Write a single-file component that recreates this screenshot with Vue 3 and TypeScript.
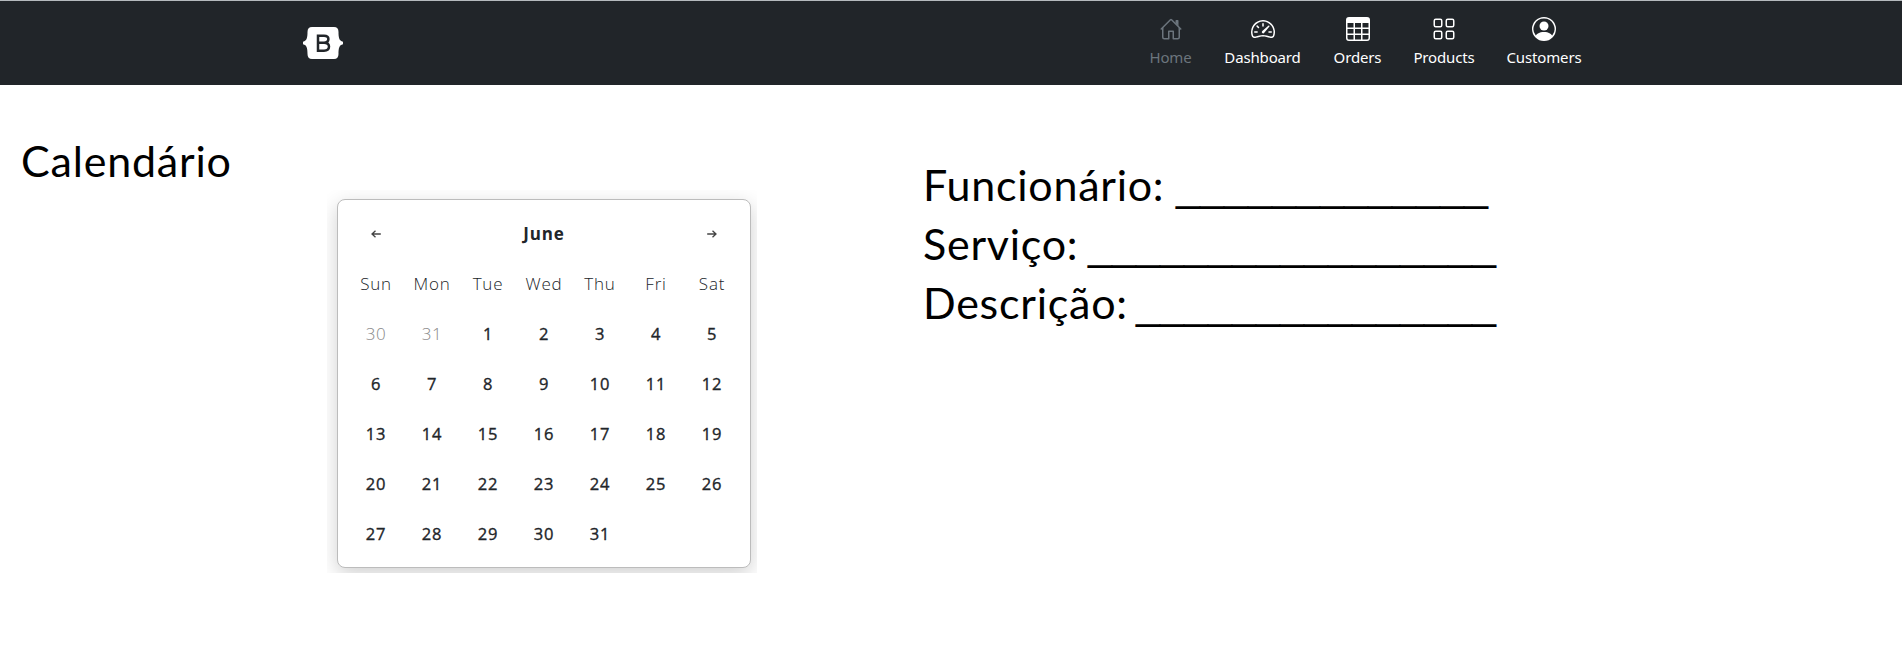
<script setup lang="ts">
interface NavItem {
  label: string
  paths: string[]
  active?: boolean
}

const navItems: NavItem[] = [
  {
    label: 'Home',
    active: true,
    paths: [
      'M2 13.5V7h1v6.500a.5.5 0 0 0 .5.5H6v-4.500a.5.5 0 0 1 .5-.5h3a.5.5 0 0 1 .5.5V14h2.500a.5.5 0 0 0 .5-.5V7h1v6.500a1.500 1.500 0 0 1-1.500 1.500H9.500a.5.5 0 0 1-.5-.5V10H7v4.500a.5.5 0 0 1-.5.5h-3A1.500 1.500 0 0 1 2 13.500zM13 2.500V6l-2-2V2.500a.5.5 0 0 1 .5-.5h1a.5.5 0 0 1 .5.5z',
      'M7.293 1.5a1 1 0 0 1 1.414 0l6.147 6.146a.5.5 0 0 1-.708.708L8 2.207 1.854 8.354a.5.5 0 1 1-.708-.708L7.293 1.5z',
    ],
  },
  {
    label: 'Dashboard',
    paths: [
      'M8 4a.5.5 0 0 1 .5.5V6a.5.5 0 0 1-1 0V4.5A.5.5 0 0 1 8 4zM3.732 5.732a.5.5 0 0 1 .707 0l.915.914a.5.5 0 1 1-.708.708l-.914-.915a.5.5 0 0 1 0-.707zM2 10a.5.5 0 0 1 .5-.5h1.586a.5.5 0 0 1 0 1H2.5A.5.5 0 0 1 2 10zm9.5 0a.5.5 0 0 1 .5-.5h1.5a.5.5 0 0 1 0 1H12a.5.5 0 0 1-.5-.5zm.754-4.246a.389.389 0 0 0-.527-.02L7.547 9.31a.91.91 0 1 0 1.302 1.258l3.434-4.297a.389.389 0 0 0-.029-.518z',
      'M0 10a8 8 0 1 1 15.547 2.661c-.442 1.253-1.845 1.602-2.932 1.25C11.309 13.488 9.475 13 8 13c-1.474 0-3.31.488-4.615.911-1.087.352-2.49.003-2.932-1.25A7.988 7.988 0 0 1 0 10zm8-7a7 7 0 0 0-6.603 9.329c.203.575.923.876 1.68.63C4.397 12.533 6.358 12 8 12s3.604.532 4.923.96c.757.245 1.477-.056 1.68-.631A7 7 0 0 0 8 3z',
    ],
  },
  {
    label: 'Orders',
    paths: [
      'M0 2a2 2 0 0 1 2-2h12a2 2 0 0 1 2 2v12a2 2 0 0 1-2 2H2a2 2 0 0 1-2-2V2zm15 2h-4v3h4V4zm0 4h-4v3h4V8zm0 4h-4v3h3a1 1 0 0 0 1-1v-2zm-5 3v-3H6v3h4zm-5 0v-3H1v2a1 1 0 0 0 1 1h3zm-4-4h4V8H1v3zm0-4h4V4H1v3zm5-3v3h4V4H6zm4 4H6v3h4V8z',
    ],
  },
  {
    label: 'Products',
    paths: [
      'M1 2.5A1.5 1.5 0 0 1 2.5 1h3A1.5 1.5 0 0 1 7 2.5v3A1.5 1.5 0 0 1 5.5 7h-3A1.5 1.5 0 0 1 1 5.5v-3zM2.5 2a.5.5 0 0 0-.5.5v3a.5.5 0 0 0 .5.5h3a.5.5 0 0 0 .5-.5v-3a.5.5 0 0 0-.5-.5h-3zm6.5.5A1.5 1.5 0 0 1 10.5 1h3A1.5 1.5 0 0 1 15 2.5v3A1.5 1.5 0 0 1 13.5 7h-3A1.5 1.5 0 0 1 9 5.5v-3zm1.5-.5a.5.5 0 0 0-.5.5v3a.5.5 0 0 0 .5.5h3a.5.5 0 0 0 .5-.5v-3a.5.5 0 0 0-.5-.5h-3zM1 10.5A1.5 1.5 0 0 1 2.5 9h3A1.5 1.5 0 0 1 7 10.5v3A1.5 1.5 0 0 1 5.5 15h-3A1.5 1.5 0 0 1 1 13.5v-3zm1.5-.5a.5.5 0 0 0-.5.5v3a.5.5 0 0 0 .5.5h3a.5.5 0 0 0 .5-.5v-3a.5.5 0 0 0-.5-.5h-3zm6.5.5A1.5 1.5 0 0 1 10.5 9h3a1.5 1.5 0 0 1 1.5 1.5v3a1.5 1.5 0 0 1-1.5 1.5h-3A1.5 1.5 0 0 1 9 13.5v-3zm1.5-.5a.5.5 0 0 0-.5.5v3a.5.5 0 0 0 .5.5h3a.5.5 0 0 0 .5-.5v-3a.5.5 0 0 0-.5-.5h-3z',
    ],
  },
  {
    label: 'Customers',
    paths: [
      'M11 6a3 3 0 1 1-6 0 3 3 0 0 1 6 0z',
      'M0 8a8 8 0 1 1 16 0A8 8 0 0 1 0 8zm8-7a7 7 0 0 0-5.468 11.37C3.242 11.226 4.805 10 8 10s4.757 1.225 5.468 2.37A7 7 0 0 0 8 1z',
    ],
  },
]

const weekdays: string[] = ['Sun', 'Mon', 'Tue', 'Wed', 'Thu', 'Fri', 'Sat']
const previousDays: number[] = [30, 31]
const days: number[] = Array.from({ length: 31 }, (_, i) => i + 1)

const fields: { label: string; blanks: number; kind: string }[] = [
  { label: 'Funcionário:', blanks: 13, kind: 'employee' },
  { label: 'Serviço:', blanks: 17, kind: 'service' },
  { label: 'Descrição:', blanks: 15, kind: 'description' },
]
</script>

<template>
  <div class="page">
    <header class="navbar">
      <a class="brand">
        <svg viewBox="0 0 40 32" width="40" height="32">
          <path
            fill="#fff"
            d="M9 0H31Q35.500 0 35.500 5C35.500 10 36 14 40 14.700V17.300C36 18 35.500 22 35.500 27Q35.500 32 31 32H9Q4.500 32 4.500 27C4.500 22 4 18 0 17.300V14.700C4 14 4.500 10 4.500 5Q4.500 0 9 0Z"
          />
          <path
            fill="none"
            stroke="#212529"
            stroke-width="2.5"
            d="M15 8.700H21Q25.400 8.700 25.400 12Q25.400 15.700 21 15.700H15M21 15.700Q26 15.700 26 19.600Q26 23.700 21 23.700H15V7.500"
          />
        </svg>
      </a>
      <nav class="links">
        <a v-for="item in navItems" :key="item.label" class="link" :class="[item.label.toLowerCase(), { active: item.active }]">
          <svg viewBox="0 0 16 16" width="24" height="24" fill="currentColor" fill-rule="evenodd">
            <path v-for="p in item.paths" :key="p" :d="p" />
          </svg>
          <span>{{ item.label }}</span>
        </a>
      </nav>
    </header>

    <main class="content">
      <h1 class="title">Calendário</h1>
      <div class="frame">
        <section class="calendar">
          <div class="month">
            <svg viewBox="0 0 10 8" width="10" height="8"><path d="M9.800 4H1M4.500.7L1 4l3.500 3.300" /></svg>
            <strong>June</strong>
            <svg viewBox="0 0 10 8" width="10" height="8"><path d="M.2 4H9M5.500.7L9 4 5.500 7.300" /></svg>
          </div>
          <div class="grid">
            <span v-for="d in weekdays" :key="d" class="weekday">{{ d }}</span>
            <span v-for="d in previousDays" :key="'p' + d" class="muted">{{ d }}</span>
            <span v-for="d in days" :key="d" class="day">{{ d }}</span>
          </div>
        </section>
      </div>
      <section class="form">
        <p v-for="f in fields" :key="f.kind" class="field">
          <span class="label" :class="f.kind">{{ f.label }}</span>
          <span class="blank">{{ '_'.repeat(f.blanks) }}</span>
        </p>
      </section>
    </main>
  </div>
</template>

<style>
body {
  margin: 0;
  background: #fff;
}
</style>

<style scoped>
.page {
  height: 648px;
  overflow: hidden;
  color: #000;
}
.navbar {
  box-sizing: border-box;
  height: 85px;
  padding: 0 304px 0 303px;
  border-top: 1px solid #b5babd;
  background: #212529;
  display: flex;
  justify-content: space-between;
}
.brand {
  margin-top: 26px;
}
.brand svg {
  display: block;
}
.links {
  display: flex;
  color: #fff;
  font: 15px/24px 'Noto Sans', 'Open Sans', sans-serif;
  letter-spacing: -0.15px;
}
.link {
  box-sizing: border-box;
  padding-top: 16px;
  display: flex;
  flex-direction: column;
  align-items: center;
  white-space: nowrap;
}
.link svg {
  display: block;
  margin-bottom: 4px;
}
.active {
  color: #6c757d;
}
.home { width: 75px; }
.dashboard { width: 109px; }
.orders { width: 81px; }
.products { width: 92px; }
.customers { width: 108px; }
.content {
  display: flex;
  align-items: flex-start;
}
.title {
  width: 306px;
  margin: 48px 0 0 21px;
  font: 43px/56px Lato, sans-serif;
  letter-spacing: 0.8px;
}
.frame {
  box-sizing: border-box;
  width: 430px;
  height: 383px;
  margin-top: 105px;
  padding: 9px 6px 5px 10px;
  overflow: hidden;
}
.calendar {
  box-sizing: border-box;
  width: 414px;
  height: 369px;
  border: 1px solid #bcbcbc;
  border-radius: 8px;
  background: #fff;
  box-shadow: 0 6px 20px rgba(0, 0, 0, 0.19);
  padding: 9px 10px 0 10px;
  color: #212529;
  font: 16px/50px 'Open Sans', 'Noto Sans', sans-serif;
}
.month {
  height: 50px;
  padding: 0 23px;
  display: flex;
  align-items: center;
  justify-content: space-between;
}
.month svg {
  fill: none;
  stroke: #444;
  stroke-width: 1.3;
}
.month strong {
  font-weight: 700;
  font-size: 17px;
  letter-spacing: 0.9px;
}
.grid {
  display: grid;
  grid-template-columns: repeat(7, 56px);
  grid-auto-rows: 50px;
  text-align: center;
}
.weekday {
  font-weight: 300;
  font-size: 17px;
  letter-spacing: 0.8px;
}
.muted {
  color: #888;
  font-weight: 300;
  font-size: 17px;
  letter-spacing: 0.5px;
}
.day {
  font-size: 16.5px;
  letter-spacing: 0.7px;
  -webkit-text-stroke: 0.35px currentColor;
}
.form {
  margin: 70px 0 0 166px;
}
.field {
  margin: 0;
  height: 59px;
  display: flex;
  align-items: baseline;
  white-space: nowrap;
}
.label {
  font: 43px/59px Lato, sans-serif;
  letter-spacing: 0.75px;
}
.employee { width: 253px; }
.service { width: 165px; }
.description { width: 213px; }
.blank {
  font: 43.15px/50px 'Liberation Sans', Arial, sans-serif;
}
</style>
